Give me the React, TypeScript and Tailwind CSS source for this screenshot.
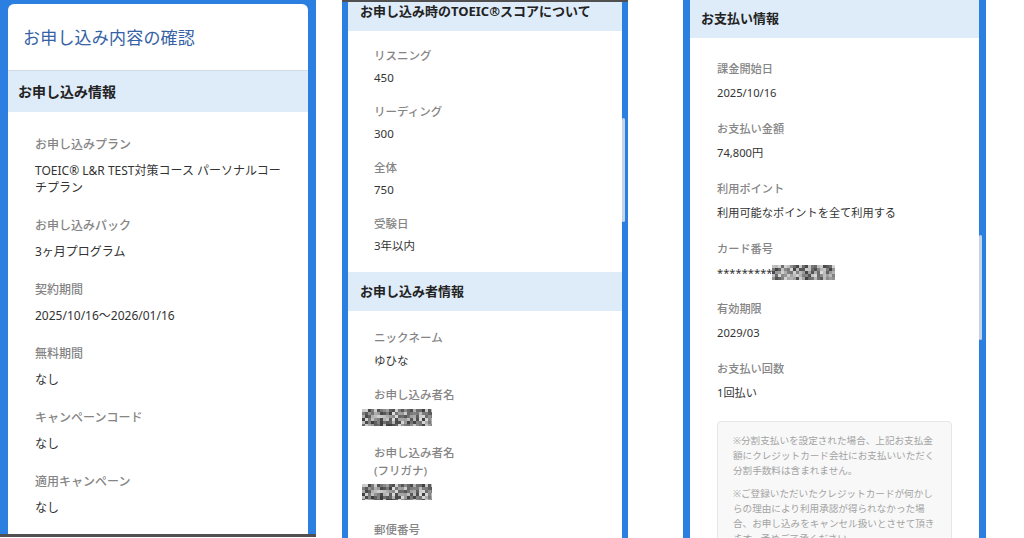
import React from 'react';

type Item = { label: React.ReactNode; value: React.ReactNode };

function Mosaic({ w, h, seed }: { w: number; h: number; seed: number }) {
  // pixelated blur used to hide personal data
  const cell = 3;
  const rects: React.ReactNode[] = [];
  let s = seed;
  for (let y = 0; y < h; y += cell) {
    for (let x = 0; x < w; x += cell) {
      s = (s * 9301 + 49297) % 233280;
      const v = s / 233280;
      const g = 60 + Math.round(v * 160);
      rects.push(
        <rect key={`${x}-${y}`} x={x} y={y} width={cell} height={cell} fill={`rgb(${g},${g},${g})`} />
      );
    }
  }
  const id = `mosaic-${seed}-${w}-${h}`;
  return (
    <svg width={w} height={h} viewBox={`0 0 ${w} ${h}`} className="block">
      <defs>
        <filter id={id}>
          <feGaussianBlur stdDeviation="0.6" />
        </filter>
      </defs>
      <g filter={`url(#${id})`}>{rects}</g>
    </svg>
  );
}

function PanelOne() {
  const items: Item[] = [
    {
      label: 'お申し込みプラン',
      value: (
        <>
          TOEIC® L&amp;R TEST対策コース パーソナルコー
          <br />
          チプラン
        </>
      ),
    },
    { label: 'お申し込みパック', value: '3ヶ月プログラム' },
    { label: '契約期間', value: '2025/10/16〜2026/01/16' },
    { label: '無料期間', value: 'なし' },
    { label: 'キャンペーンコード', value: 'なし' },
    { label: '適用キャンペーン', value: 'なし' },
  ];

  return (
    <div className="flex flex-col w-[316px] shrink-0">
      <div className="h-[534px] bg-[#2a7fe0] px-[8px] pt-[4px]">
        <div className="h-full bg-white rounded-t-[6px] overflow-hidden">
          <div className="h-[67px] flex items-center pl-[15px] pt-[2px] border-b border-[#d3dbe5]">
            <h1 className="text-[17px] text-[#3561a5] tracking-[0.2px]">お申し込み内容の確認</h1>
          </div>
          <div className="h-[41px] flex items-center pl-[10px] bg-[#deebf8]">
            <h2 className="text-[14px] font-bold text-[#222]">お申し込み情報</h2>
          </div>
          <div className="pl-[27px] pt-[24px] flex flex-col gap-[21px]">
            {items.map((it, i) => (
              <div key={i} className="text-[12px] leading-[17px]">
                <div className="text-[#858585] font-medium">{it.label}</div>
                <div className="mt-[9px] text-[#333]">{it.value}</div>
              </div>
            ))}
          </div>
        </div>
      </div>
      <div className="h-[3px] bg-[#505050]" />
    </div>
  );
}

function PanelTwo() {
  const scores: Item[] = [
    { label: 'リスニング', value: '450' },
    { label: 'リーディング', value: '300' },
    { label: '全体', value: '750' },
    { label: '受験日', value: '3年以内' },
  ];

  return (
    <div className="relative flex flex-col w-[286px] h-[538px] shrink-0 ml-[26px]">
      <div className="h-[2px] bg-[#505050]" />
      <div className="flex-1 border-x-[6px] border-[#2a7fe0] bg-white overflow-hidden">
        <div className="-mt-[10px] h-[39px] flex items-center pl-[12px] bg-[#deebf8]">
          <h2 className="text-[13px] font-bold text-[#222]">お申し込み時のTOEIC®スコアについて</h2>
        </div>
        <div className="pl-[26px] pt-[17px] pb-[18px] flex flex-col gap-[18px]">
          {scores.map((it, i) => (
            <div key={i} className="text-[11.5px] leading-[16px]">
              <div className="text-[#858585] font-medium">{it.label}</div>
              <div className="mt-[6px] text-[#333]">{it.value}</div>
            </div>
          ))}
        </div>
        <div className="h-[39px] flex items-center pl-[12px] bg-[#deebf8]">
          <h2 className="text-[13px] font-bold text-[#222]">お申し込み者情報</h2>
        </div>
        <div className="pl-[26px] pt-[19px] flex flex-col gap-[18px] text-[11.5px] leading-[16px]">
          <div>
            <div className="text-[#858585] font-medium">ニックネーム</div>
            <div className="mt-[7px] text-[#333]">ゆひな</div>
          </div>
          <div>
            <div className="text-[#858585] font-medium">お申し込み者名</div>
            <div className="mt-[6px] -ml-[12px]">
              <Mosaic w={70} h={17} seed={17} />
            </div>
          </div>
          <div>
            <div className="text-[#858585] font-medium leading-[18px]">
              お申し込み者名
              <br />
              (フリガナ)
            </div>
            <div className="mt-[4px] -ml-[12px]">
              <Mosaic w={70} h={16} seed={17} />
            </div>
          </div>
          <div className="mt-[4px]">
            <div className="text-[#858585] font-medium">郵便番号</div>
          </div>
        </div>
      </div>
      <div className="absolute right-[3px] top-[118px] h-[104px] w-[3px] rounded-full bg-[#c4d3e8]" />
    </div>
  );
}

function PanelThree() {
  const items: Item[] = [
    { label: '課金開始日', value: '2025/10/16' },
    { label: 'お支払い金額', value: '74,800円' },
    { label: '利用ポイント', value: '利用可能なポイントを全て利用する' },
    {
      label: 'カード番号',
      value: (
        <span className="flex items-center">
          <span>*********</span>
          <Mosaic w={63} h={15} seed={91} />
        </span>
      ),
    },
    { label: '有効期限', value: '2029/03' },
    { label: 'お支払い回数', value: '1回払い' },
  ];

  return (
    <div className="relative flex flex-col w-[303px] h-[538px] shrink-0 ml-[55px]">
      <div className="flex-1 border-x-[7px] border-[#2a7fe0] bg-white overflow-hidden">
        <div className="h-[38px] flex items-center pl-[11px] bg-[#deebf8]">
          <h2 className="text-[13px] font-bold text-[#222]">お支払い情報</h2>
        </div>
        <div className="pl-[27px] pt-[23px] flex flex-col gap-[20.5px]">
          {items.map((it, i) => (
            <div key={i} className="text-[11.2px] leading-[16px]">
              <div className="text-[#858585] font-medium">{it.label}</div>
              <div className="mt-[7.5px] text-[#333]">{it.value}</div>
            </div>
          ))}
        </div>
        <div className="mt-[20px] mx-[27px] rounded-[4px] border border-[#e6e6e6] bg-[#f8f8f8] px-[15px] pt-[11px] pb-[12px] text-[9.6px] leading-[15.2px] text-[#a3a3a3] whitespace-nowrap">
          <p>
            ※分割支払いを設定された場合、上記お支払金
            <br />
            額にクレジットカード会社にお支払いいただく
            <br />
            分割手数料は含まれません。
          </p>
          <p className="mt-[7.5px]">
            ※ご登録いただいたクレジットカードが何かし
            <br />
            らの理由により利用承認が得られなかった場
            <br />
            合、お申し込みをキャンセル扱いとさせて頂き
            <br />
            ます。予めご了承ください。
          </p>
        </div>
      </div>
      <div className="absolute right-[4px] top-[235px] h-[105px] w-[3px] rounded-full bg-[#c4d3e8]" />
    </div>
  );
}

export default function App() {
  return (
    <div className="flex w-[1024px] h-[538px] overflow-hidden bg-white font-['Noto_Sans','Noto_Sans_CJK_JP',sans-serif]">
      <PanelOne />
      <PanelTwo />
      <PanelThree />
    </div>
  );
}
